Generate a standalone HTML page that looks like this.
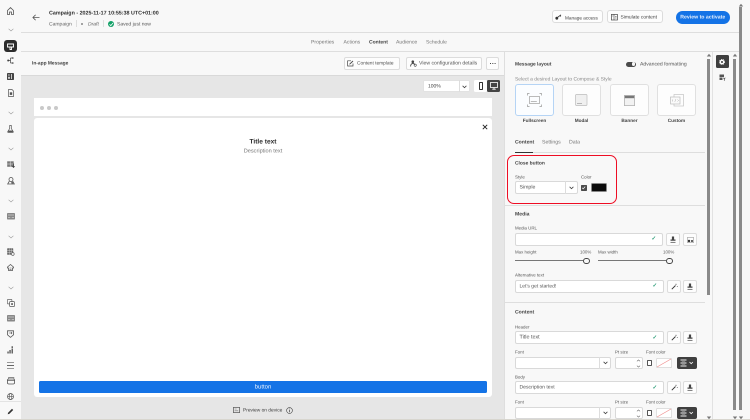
<!DOCTYPE html>
<html lang="en"><head><meta charset="utf-8"><title>Campaign</title>
<style>
*{box-sizing:border-box}
html,body{margin:0;padding:0}
body{width:750px;height:420px;overflow:hidden;background:#f8f8f8;position:relative;font-family:"Liberation Sans",sans-serif;color:#444;font-size:5.1px}
#w{position:absolute;left:0;top:0;width:750px;height:420px;overflow:hidden;background:#f8f8f8;filter:blur(.3px);text-rendering:geometricPrecision}
.a{position:absolute}
.t{position:absolute;white-space:nowrap;line-height:9px;transform:translateY(.6px)}
.b{font-weight:bold}
.btn{position:absolute;background:#fdfdfd;border:.7px solid #dcdcdc;border-radius:2px}
.f{position:absolute;background:#fff;border:.7px solid #d9d9d9;border-radius:2px}
.l{color:#5a5a5a;font-size:4.4px}
.h{position:absolute;background:#dedede;height:1px}
.sb{position:absolute;background:#8a8a8a;width:2.7px}
svg{position:absolute;overflow:visible}
.ck{position:absolute;color:#2d9d78;font-size:5.5px;font-weight:bold;line-height:8px}
.card{position:absolute;top:84px;width:39px;height:32px;background:#fdfdfd;border:.7px solid #e0e0e0;border-radius:3px}
.cap{position:absolute;top:116px;width:39px;text-align:center;font-weight:bold;font-size:4.7px;line-height:9px;color:#444}
</style></head><body><div id="w">

<!-- canvas -->
<div class="a" style="left:21px;top:75px;width:484px;height:344px;background:#e6e6e6"></div>
<div class="a" style="left:34px;top:98px;width:458px;height:18px;background:#fff"></div>
<div class="a" style="left:34px;top:118px;width:458px;height:279px;background:#fff;border-radius:3px"></div>
<div class="a" style="left:40px;top:105.5px;width:4px;height:4px;border-radius:50%;background:#c9c9c9"></div>
<div class="a" style="left:47px;top:105.5px;width:4px;height:4px;border-radius:50%;background:#c9c9c9"></div>
<div class="a" style="left:54px;top:105.5px;width:4px;height:4px;border-radius:50%;background:#c9c9c9"></div>
<div class="t b" style="left:213px;width:100px;text-align:center;top:137px;font-size:6.6px;color:#2c2c2c">Title text</div>
<div class="t" style="left:213px;width:100px;text-align:center;top:147px;font-size:5.6px;color:#777">Description text</div>
<svg style="left:482px;top:124px" width="6" height="6" viewBox="0 0 6 6"><path d="M.8.8l4.4 4.4M5.2.8L.8 5.2" stroke="#222" stroke-width=".9" fill="none"/></svg>
<div class="a" style="left:39px;top:381px;width:448px;height:12px;background:#1473e6;border-radius:1.5px"></div>
<div class="t" style="left:39px;width:448px;top:383px;text-align:center;color:#e8f1fd;font-size:6px">button</div>
<svg style="left:233px;top:407px" width="7" height="6" viewBox="0 0 7 6"><rect x=".4" y=".4" width="6.2" height="5.2" fill="none" stroke="#555" stroke-width=".7"/><path d="M1.600 2h2M1.600 3.800h3.600" stroke="#777" stroke-width=".6"/></svg>
<div class="t" style="left:243px;top:406px;font-size:4.85px;color:#444">Preview on device</div>
<svg style="left:286px;top:407px" width="7" height="7" viewBox="0 0 7 7"><circle cx="3.500" cy="3.500" r="2.900" fill="none" stroke="#444" stroke-width=".6"/><path d="M3.500 3v2.200M3.500 1.600v.8" stroke="#444" stroke-width=".7"/></svg>
<div class="a" style="left:0;top:419px;width:750px;height:1px;background:#d8d6cf"></div>

<!-- zoom toolbar -->
<div class="f" style="left:423px;top:80px;width:47px;height:12px;border-radius:1.500px;border-color:#e2e2e2"></div>
<div class="a" style="left:458.500px;top:80px;width:.7px;height:12px;background:#ddd"></div>
<div class="t" style="left:428px;top:81.500px;font-size:5px">100%</div>
<svg style="left:462px;top:84.500px" width="5" height="4" viewBox="0 0 5 4"><path d="M.6.800l1.900 1.900L4.400.800" fill="none" stroke="#444" stroke-width=".8"/></svg>
<div class="a" style="left:474px;top:80px;width:13px;height:12px;background:#fff;border-radius:1.500px"></div>
<div class="a" style="left:478.500px;top:82px;width:4px;height:8px;border:.8px solid #333;border-radius:.7px"></div>
<div class="a" style="left:487px;top:80px;width:13px;height:12px;background:#444;border-radius:1.500px"></div>
<svg style="left:489.500px;top:82px" width="8" height="8" viewBox="0 0 8 8"><rect x=".5" y=".5" width="7" height="5" fill="none" stroke="#fff" stroke-width=".8"/><path d="M4 5.500v1.500M2.300 7.200h3.400" stroke="#fff" stroke-width=".8"/></svg>

<!-- header -->
<svg style="left:32px;top:14px" width="8" height="7" viewBox="0 0 8 7"><path d="M7.500 3.500H1M3.600.8L.9 3.500l2.700 2.700" fill="none" stroke="#555" stroke-width=".8"/></svg>
<div class="t b" style="left:49px;top:8.500px;font-size:5.350px;color:#2c2c2c">Campaign - 2025-11-17 10:55:38 UTC+01:00</div>
<div class="t" style="left:49px;top:19.500px;color:#666;font-size:5px">Campaign</div>
<div class="a" style="left:75.500px;top:20px;width:.6px;height:7px;background:#ddd"></div>
<div class="a" style="left:81px;top:23px;width:2.400px;height:2.400px;border-radius:50%;background:#888"></div>
<div class="t" style="left:88px;top:19.500px;color:#666;font-style:italic;font-size:5px">Draft</div>
<div class="a" style="left:103px;top:20px;width:.6px;height:7px;background:#ddd"></div>
<div class="a" style="left:107.500px;top:20.500px;width:6.500px;height:6.500px;border-radius:50%;background:#12a067"></div>
<svg style="left:107.500px;top:20.500px" width="6.500" height="6.500" viewBox="0 0 6.500 6.500"><path d="M1.600 3.300l1.200 1.300 2.200-2.600" fill="none" stroke="#fff" stroke-width=".8"/></svg>
<div class="t" style="left:117px;top:19.500px;color:#555;font-size:5px">Saved just now</div>

<div class="btn" style="left:552px;top:10px;width:51px;height:13px;border-radius:3px"></div>
<svg style="left:555px;top:13.500px" width="7" height="6" viewBox="0 0 7 6"><circle cx="1.800" cy="4.200" r="1.400" fill="#333"/><path d="M2.800 3.200L6 .8M5 1.500l.8.9" stroke="#333" stroke-width=".9"/></svg>
<div class="t" style="left:565px;top:12.500px;color:#444;font-size:4.700px">Manage access</div>
<div class="btn" style="left:607px;top:10px;width:56px;height:13px;border-radius:3px"></div>
<svg style="left:611px;top:13.500px" width="7" height="6.500" viewBox="0 0 7 6.500"><rect x=".4" y=".4" width="6" height="5.600" fill="none" stroke="#444" stroke-width=".7"/><path d="M3 .4v5.600M1.200 2h1M4 2.500h1.600M4 4h1.600" stroke="#444" stroke-width=".6"/></svg>
<div class="t" style="left:620.500px;top:12.500px;color:#444;font-size:4.900px">Simulate content</div>
<div class="a" style="left:675.500px;top:10.500px;width:54.500px;height:13px;border-radius:6.500px;background:#1473e6"></div>
<div class="t b" style="left:675.500px;width:54.500px;text-align:center;top:12.500px;color:#e8f1fd;font-size:5.200px">Review to activate</div>
<div class="h" style="left:21px;top:32px;width:718px"></div>

<!-- tabs -->
<div class="t" style="left:311px;top:37.500px;color:#777">Properties</div>
<div class="t" style="left:343.500px;top:37.500px;color:#777">Actions</div>
<div class="t b" style="left:369px;top:37.500px;color:#444;font-size:5px">Content</div>
<div class="t" style="left:396px;top:37.500px;color:#777">Audience</div>
<div class="t" style="left:426px;top:37.500px;color:#777;font-size:5px">Schedule</div>
<div class="a" style="left:369px;top:50.500px;width:18px;height:1.200px;background:#333"></div>
<div class="h" style="left:21px;top:51px;width:718px"></div>

<!-- toolbar -->
<div class="t b" style="left:32px;top:59px;color:#444;font-size:4.850px">In-app Message</div>
<div class="btn" style="left:344px;top:57px;width:56px;height:13px"></div>
<svg style="left:347px;top:60px" width="7" height="7" viewBox="0 0 7 7"><path d="M6 3.500V6H.6V.8h3.400" fill="none" stroke="#444" stroke-width=".7"/><path d="M2.500 4.300L6 1" stroke="#444" stroke-width=".9"/></svg>
<div class="t" style="left:357px;top:59px;color:#555;font-size:4.800px">Content template</div>
<div class="btn" style="left:406px;top:57px;width:76px;height:13px"></div>
<svg style="left:410px;top:60px" width="7" height="7" viewBox="0 0 7 7"><circle cx="2.800" cy="1.700" r="1.300" fill="#444"/><path d="M.6 6.500c0-2 1-3 2.200-3s1.800.6 2 1.200" fill="none" stroke="#444" stroke-width=".9"/><circle cx="5.200" cy="5.200" r="1.100" fill="none" stroke="#444" stroke-width=".6"/></svg>
<div class="t" style="left:419px;top:59px;color:#555;font-size:5.150px">View configuration details</div>
<div class="btn" style="left:486px;top:57px;width:13px;height:13px"></div>
<div class="a" style="left:489.500px;top:63px;width:1.200px;height:1.200px;background:#444;box-shadow:2.300px 0 #444,4.600px 0 #444"></div>
<div class="h" style="left:21px;top:75px;width:484px;background:#d9d9d9"></div>

<!-- right panel -->
<div class="a" style="left:504px;top:52px;width:1px;height:367px;background:#dedede"></div>
<div class="t b" style="left:515px;top:59.500px;color:#444;font-size:4.900px">Message layout</div>
<div class="a" style="left:626px;top:61.500px;width:10px;height:5.500px;border-radius:3px;background:#4b4b4b"></div>
<div class="a" style="left:631.500px;top:62.300px;width:3.800px;height:3.800px;border-radius:50%;background:#f8f8f8"></div>
<div class="t" style="left:640px;top:59.500px;color:#555;font-size:5.100px">Advanced formatting</div>
<div class="t" style="left:515px;top:74.500px;color:#8a8a8a;font-size:4.950px">Select a desired Layout to Compose &amp; Style</div>

<div class="card" style="left:515px;border-color:#b5d4f5;background:#fbfdff"></div>
<svg style="left:527px;top:93px" width="15" height="14" viewBox="0 0 15 14"><rect x="2.500" y="3.500" width="10" height="7" fill="none" stroke="#aaa" stroke-width=".8"/><path d="M3.800 8.500h6" stroke="#aaa" stroke-width=".8"/><path d="M.5 2.500V.5h2M12.500.5h2v2M14.500 11.500v2h-2M2.500 13.500h-2v-2" fill="none" stroke="#999" stroke-width=".7"/></svg>
<div class="cap" style="left:515px">Fullscreen</div>
<div class="card" style="left:562px"></div>
<svg style="left:575px;top:94px" width="13" height="12" viewBox="0 0 13 12"><rect x=".5" y=".5" width="11.500" height="11" rx="1" fill="#f0f0f0" stroke="#bbb" stroke-width=".7"/><path d="M2 9.500h5" stroke="#aaa" stroke-width=".8"/></svg>
<div class="cap" style="left:562px">Modal</div>
<div class="card" style="left:610px"></div>
<svg style="left:624px;top:94.500px" width="11" height="11" viewBox="0 0 11 11"><rect x=".4" y=".4" width="10.200" height="10.200" fill="#f2f2f2" stroke="#aaa" stroke-width=".7"/><rect x=".8" y=".8" width="9.400" height="2.400" fill="#777"/></svg>
<div class="cap" style="left:610px">Banner</div>
<div class="card" style="left:657px"></div>
<svg style="left:670px;top:93.500px" width="14" height="13" viewBox="0 0 14 13"><rect x="4" y=".5" width="9.500" height="11.500" fill="none" stroke="#c4c4c4" stroke-width=".7"/><rect x=".5" y="3" width="9.500" height="7" fill="#fafafa" stroke="#bbb" stroke-width=".7"/><path d="M3 5.500L2 6.500l1 1M7.500 5.500l1 1-1 1M5.800 5.200L4.800 7.800" fill="none" stroke="#aaa" stroke-width=".5"/></svg>
<div class="cap" style="left:657px">Custom</div>

<div class="t b" style="left:515px;top:138px;color:#444;font-size:5.100px">Content</div>
<div class="t" style="left:542px;top:138px;color:#777;font-size:5.200px">Settings</div>
<div class="t" style="left:569px;top:138px;color:#777;font-size:5.200px">Data</div>
<div class="h" style="left:515px;top:152px;width:190px"></div>
<div class="a" style="left:515px;top:151.500px;width:18px;height:1.200px;background:#333"></div>

<!-- close button -->
<div class="t b" style="left:515px;top:158.500px;color:#444;font-size:4.900px">Close button</div>
<div class="t l" style="left:515px;top:172px">Style</div>
<div class="t l" style="left:581px;top:172px">Color</div>
<div class="f" style="left:515px;top:181px;width:63px;height:13px"></div>
<div class="a" style="left:564.500px;top:181px;width:.7px;height:13px;background:#ddd"></div>
<div class="t" style="left:519.500px;top:183px;font-size:5.200px;color:#555">Simple</div>
<svg style="left:569px;top:186px" width="5" height="4" viewBox="0 0 5 4"><path d="M.6.800l1.900 1.900L4.400.800" fill="none" stroke="#444" stroke-width=".8"/></svg>
<div class="a" style="left:581px;top:185px;width:5.500px;height:5.500px;background:#4b4b4b;border-radius:.7px"></div>
<svg style="left:581px;top:185px" width="5.500" height="5.500" viewBox="0 0 5.500 5.500"><path d="M1.200 2.800l1 1.100 2-2.300" fill="none" stroke="#fff" stroke-width=".7"/></svg>
<div class="a" style="left:591px;top:183px;width:15.500px;height:9px;background:#0b0b0b;border-radius:1.500px;border:.5px solid #888"></div>
<div class="a" style="left:507px;top:155px;width:110px;height:49px;border:1px solid #ee0d24;border-radius:7px"></div>
<div class="h" style="left:505px;top:204.500px;width:200px"></div>

<!-- media -->
<div class="t b" style="left:515px;top:209.500px;color:#444;font-size:5.100px">Media</div>
<div class="t l" style="left:515px;top:223px">Media URL</div>
<div class="f" style="left:515px;top:233px;width:148px;height:13px"></div>
<div class="ck" style="left:651.500px;top:235px">✓</div>
<div class="btn" style="left:666px;top:233px;width:14px;height:13px"></div>
<svg style="left:670px;top:236px" width="6" height="7" viewBox="0 0 6 7"><path d="M1.900.5h2.200v3H5.500v1.200H.5V3.500h1.400z" fill="#444"/><path d="M.5 6.300h5" stroke="#444" stroke-width=".7"/></svg>
<div class="btn" style="left:683px;top:233px;width:14px;height:13px"></div>
<svg style="left:686.500px;top:236.500px" width="7" height="6" viewBox="0 0 7 6"><rect x=".4" y=".4" width="6.200" height="5.200" fill="none" stroke="#888" stroke-width=".5"/><circle cx="2" cy="4" r="1.200" fill="#333"/><circle cx="5" cy="4" r="1" fill="#333"/></svg>
<div class="t l" style="left:515px;top:247px">Max height</div>
<div class="t l" style="left:580px;top:247px">100%</div>
<div class="t l" style="left:598px;top:247px">Max width</div>
<div class="t l" style="left:663px;top:247px">100%</div>
<div class="a" style="left:515px;top:260px;width:68px;height:1.100px;background:#777"></div>
<div class="a" style="left:583px;top:257.500px;width:6.500px;height:6.500px;border:.9px solid #444;border-radius:50%;background:#f8f8f8"></div>
<div class="a" style="left:598px;top:260px;width:68px;height:1.100px;background:#777"></div>
<div class="a" style="left:666px;top:257.500px;width:6.500px;height:6.500px;border:.9px solid #444;border-radius:50%;background:#f8f8f8"></div>
<div class="t l" style="left:515px;top:270px">Alternative text</div>
<div class="f" style="left:515px;top:279.500px;width:149px;height:13px"></div>
<div class="t" style="left:519.500px;top:281.500px;color:#555;font-size:5px">Let's get started!</div>
<div class="ck" style="left:652.500px;top:282px">✓</div>
<div class="btn" style="left:667px;top:279.500px;width:13.500px;height:13px"></div>
<svg style="left:670.500px;top:282.500px" width="7" height="7" viewBox="0 0 7 7"><path d="M.8 6.200L4.500 2.500" stroke="#333" stroke-width=".9"/><path d="M5 .6v1.400M4.300 1.300h1.400M6.300 3v1M5.800 3.500h1" stroke="#555" stroke-width=".4"/></svg>
<div class="btn" style="left:683px;top:279.500px;width:14px;height:13px"></div>
<svg style="left:687px;top:282.500px" width="6" height="7" viewBox="0 0 6 7"><path d="M1.900.5h2.200v3H5.500v1.200H.5V3.500h1.400z" fill="#444"/><path d="M.5 6.300h5" stroke="#444" stroke-width=".7"/></svg>
<div class="h" style="left:505px;top:302px;width:200px"></div>

<!-- content -->
<div class="t b" style="left:515px;top:308px;color:#444;font-size:5.100px">Content</div>
<div class="t l" style="left:515px;top:321.500px">Header</div>
<div class="f" style="left:515px;top:331px;width:149px;height:13px"></div>
<div class="t" style="left:519.500px;top:332.500px;color:#555;font-size:5.400px">Title text</div>
<div class="ck" style="left:652.500px;top:333.500px">✓</div>
<div class="btn" style="left:667px;top:331px;width:13.500px;height:13px"></div>
<svg style="left:670.500px;top:334px" width="7" height="7" viewBox="0 0 7 7"><path d="M.8 6.200L4.500 2.500" stroke="#333" stroke-width=".9"/><path d="M5 .6v1.400M4.300 1.300h1.400M6.300 3v1M5.800 3.500h1" stroke="#555" stroke-width=".4"/></svg>
<div class="btn" style="left:683px;top:331px;width:14px;height:13px"></div>
<svg style="left:687px;top:334px" width="6" height="7" viewBox="0 0 6 7"><path d="M1.900.5h2.200v3H5.500v1.200H.5V3.500h1.400z" fill="#444"/><path d="M.5 6.300h5" stroke="#444" stroke-width=".7"/></svg>
<div class="t l" style="left:515px;top:346.500px">Font</div>
<div class="t l" style="left:615px;top:346.500px">Pt size</div>
<div class="t l" style="left:646px;top:346.500px">Font color</div>
<div class="f" style="left:515px;top:356.500px;width:96px;height:12.500px"></div>
<div class="a" style="left:598.500px;top:356.500px;width:.7px;height:12.500px;background:#ddd"></div>
<svg style="left:602.500px;top:361px" width="5" height="4" viewBox="0 0 5 4"><path d="M.6.800l1.900 1.900L4.400.800" fill="none" stroke="#444" stroke-width=".8"/></svg>
<div class="f" style="left:615px;top:356.500px;width:28px;height:12.500px"></div>
<svg style="left:635.500px;top:358.500px" width="5" height="9" viewBox="0 0 5 9"><path d="M.9 2.300L2.500.9l1.600 1.400M.9 6.700l1.600 1.400 1.600-1.400" fill="none" stroke="#666" stroke-width=".6"/></svg>
<div class="a" style="left:646.500px;top:360px;width:5.500px;height:5.500px;border:.7px solid #555;border-radius:.7px;background:#fff"></div>
<svg style="left:656px;top:357.500px" width="16" height="10" viewBox="0 0 16 10"><rect x=".3" y=".3" width="15.400" height="9.400" rx="1.500" fill="#fff" stroke="#ccc" stroke-width=".6"/><path d="M1 9L15 1" stroke="#f08a8a" stroke-width=".6"/></svg>
<div class="a" style="left:677px;top:356.500px;width:19.500px;height:12.500px;background:#3f3f3f;border-radius:2px"></div>
<svg style="left:680px;top:359px" width="14" height="8" viewBox="0 0 14 8"><path d="M.5 1h6M.5 4h6M.5 7h6" stroke="#eee" stroke-width=".9"/><path d="M1.800 2.500h3.400M1.800 5.500h3.400" stroke="#bbb" stroke-width=".6"/><path d="M9.500 3l1.700 1.700L12.900 3" fill="none" stroke="#fff" stroke-width=".8"/></svg>

<div class="t l" style="left:515px;top:371.500px">Body</div>
<div class="f" style="left:515px;top:381px;width:149px;height:13px"></div>
<div class="t" style="left:519.500px;top:383px;color:#555;font-size:5.100px">Description text</div>
<div class="ck" style="left:652.500px;top:384px">✓</div>
<div class="btn" style="left:667px;top:381px;width:13.500px;height:13px"></div>
<svg style="left:670.500px;top:384px" width="7" height="7" viewBox="0 0 7 7"><path d="M.8 6.200L4.500 2.500" stroke="#333" stroke-width=".9"/><path d="M5 .6v1.400M4.300 1.300h1.400M6.300 3v1M5.800 3.500h1" stroke="#555" stroke-width=".4"/></svg>
<div class="btn" style="left:683px;top:381px;width:14px;height:13px"></div>
<svg style="left:687px;top:384px" width="6" height="7" viewBox="0 0 6 7"><path d="M1.900.5h2.200v3H5.500v1.200H.5V3.500h1.400z" fill="#444"/><path d="M.5 6.300h5" stroke="#444" stroke-width=".7"/></svg>
<div class="t l" style="left:515px;top:396.500px">Font</div>
<div class="t l" style="left:615px;top:396.500px">Pt size</div>
<div class="t l" style="left:646px;top:396.500px">Font color</div>
<div class="f" style="left:515px;top:406.500px;width:96px;height:12.500px"></div>
<div class="a" style="left:598.500px;top:406.500px;width:.7px;height:12.500px;background:#ddd"></div>
<svg style="left:602.500px;top:411px" width="5" height="4" viewBox="0 0 5 4"><path d="M.6.800l1.900 1.900L4.400.800" fill="none" stroke="#444" stroke-width=".8"/></svg>
<div class="f" style="left:615px;top:406.500px;width:28px;height:12.500px"></div>
<svg style="left:635.500px;top:408.500px" width="5" height="9" viewBox="0 0 5 9"><path d="M.9 2.300L2.500.9l1.600 1.400M.9 6.700l1.600 1.400 1.600-1.400" fill="none" stroke="#666" stroke-width=".6"/></svg>
<div class="a" style="left:646.500px;top:410px;width:5.500px;height:5.500px;border:.7px solid #555;border-radius:.7px;background:#fff"></div>
<svg style="left:656px;top:407.500px" width="16" height="10" viewBox="0 0 16 10"><rect x=".3" y=".3" width="15.400" height="9.400" rx="1.500" fill="#fff" stroke="#ccc" stroke-width=".6"/><path d="M1 9L15 1" stroke="#f08a8a" stroke-width=".6"/></svg>
<div class="a" style="left:677px;top:406.500px;width:19.500px;height:12.500px;background:#3f3f3f;border-radius:2px"></div>
<svg style="left:680px;top:409px" width="14" height="8" viewBox="0 0 14 8"><path d="M.5 1h6M.5 4h6M.5 7h6" stroke="#eee" stroke-width=".9"/><path d="M1.800 2.500h3.400M1.800 5.500h3.400" stroke="#bbb" stroke-width=".6"/><path d="M9.500 3l1.700 1.700L12.900 3" fill="none" stroke="#fff" stroke-width=".8"/></svg>

<div class="a" style="left:712px;top:52px;width:1px;height:367px;background:#e2e2e2"></div>
<!-- scrollbars -->
<div class="sb" style="left:707.300px;top:59px;height:236px"></div>
<div class="sb" style="left:733.300px;top:59px;height:351px"></div>
<div class="sb" style="left:739px;top:7px;height:403px"></div>
<svg style="left:706px;top:53px" width="6" height="4"><path d="M.8 3.500L3 .8l2.200 2.700z" fill="#777"/></svg>
<svg style="left:732px;top:53px" width="6" height="4"><path d="M.8 3.500L3 .8l2.200 2.700z" fill="#777"/></svg>
<svg style="left:738px;top:3px" width="6" height="4"><path d="M.8 3.500L3 .8l2.200 2.700z" fill="#777"/></svg>
<svg style="left:706px;top:415.500px" width="6" height="4"><path d="M.8.500L3 3.200 5.200.500z" fill="#777"/></svg>
<svg style="left:731.500px;top:415.500px" width="6" height="4"><path d="M.8.500L3 3.200 5.200.500z" fill="#777"/></svg>
<svg style="left:737.500px;top:415.500px" width="6" height="4"><path d="M.8.500L3 3.200 5.200.500z" fill="#777"/></svg>

<!-- right rail -->
<div class="a" style="left:715.500px;top:55px;width:13px;height:12.500px;background:#3f3f3f;border-radius:1.500px"></div>
<svg style="left:719px;top:58.500px" width="6" height="6" viewBox="0 0 6 6"><circle cx="3" cy="3" r="1.700" fill="none" stroke="#fff" stroke-width="1.300"/><circle cx="3" cy="3" r="2.700" fill="none" stroke="#fff" stroke-width=".7" stroke-dasharray="1 .9"/></svg>
<svg style="left:719px;top:74px" width="7" height="7" viewBox="0 0 7 7"><path d="M.5.500h4.500v2.500H.5zM.5 3.500h3v2.500h-3z" fill="#555"/><path d="M4.300 3.800l1 1 1-1M5.300 4.800V6.800" stroke="#444" stroke-width=".7" fill="none"/></svg>

<!-- sidebar -->
<svg style="left:7px;top:7px" width="7" height="8" viewBox="0 0 7 8"><path d="M.5 3.500L3.500.6l3 2.900v4H4.500V5H2.500v2.500H.5z" fill="none" stroke="#555" stroke-width=".8"/></svg>
<svg style="left:8px;top:28px" width="6" height="4"><path d="M.6.800L3 3l2.400-2.200" fill="none" stroke="#999" stroke-width=".6"/></svg>
<div class="a" style="left:4px;top:39.500px;width:12.500px;height:12.500px;background:#2c2c2c;border-radius:3px"></div>
<svg style="left:7px;top:42.500px" width="7" height="7" viewBox="0 0 7 7"><path d="M.5 1h6v3h-6zM3 4v2.500h1.500V4" fill="none" stroke="#fff" stroke-width=".9"/></svg>
<svg style="left:7px;top:57px" width="7" height="7" viewBox="0 0 7 7"><path d="M1.500 3.500h2M3.500 1h2M3.500 6h2M3.500 1v5" fill="none" stroke="#444" stroke-width=".7"/><circle cx="1.200" cy="3.500" r="1" fill="#444"/><circle cx="5.800" cy="1" r=".8" fill="#444"/><circle cx="5.800" cy="6" r=".8" fill="#444"/></svg>
<svg style="left:7px;top:73px" width="7" height="7" viewBox="0 0 7 7"><rect width="7" height="7" rx=".8" fill="#444"/><path d="M1 2h1.800M4.500 1v5" stroke="#fff" stroke-width=".7"/><rect x="1" y="3.800" width="2" height="2" fill="#ccc"/></svg>
<svg style="left:7.500px;top:88.500px" width="6" height="8" viewBox="0 0 6 8"><path d="M.5.500h3.500L5.500 2v5.500h-5z" fill="none" stroke="#555" stroke-width=".7"/><rect x="1.800" y="3.300" width="2.400" height="2.600" fill="#555"/></svg>
<svg style="left:8px;top:111px" width="6" height="4"><path d="M.6.800L3 3l2.400-2.200" fill="none" stroke="#999" stroke-width=".6"/></svg>
<svg style="left:7px;top:124.500px" width="7" height="8" viewBox="0 0 7 8"><path d="M2.300.5h2.400M2.700.5v3L.8 6.500c-.3.600 0 1 .6 1h4.200c.6 0 .9-.4.600-1L4.300 3.500v-3" fill="none" stroke="#555" stroke-width=".7"/><path d="M1.500 5.500h4l.5 1.500H1z" fill="#555"/></svg>
<svg style="left:8px;top:147px" width="6" height="4"><path d="M.6.800L3 3l2.400-2.200" fill="none" stroke="#999" stroke-width=".6"/></svg>
<svg style="left:6.500px;top:161px" width="8" height="7" viewBox="0 0 8 7"><rect x=".2" y=".3" width="6.500" height="5.500" fill="#777"/><path d="M3.200.3v5.500M.2 3h6.500" stroke="#eee" stroke-width=".5"/><path d="M6.500 2.500v4M5.300 5.200l1.200 1.300 1.200-1.300" fill="none" stroke="#333" stroke-width=".7"/></svg>
<svg style="left:6.500px;top:176.500px" width="8" height="8" viewBox="0 0 8 8"><circle cx="4" cy="2.500" r="2" fill="none" stroke="#555" stroke-width=".8"/><path d="M2.300 4.200L.7 7h6.600L5.700 4.200" fill="none" stroke="#555" stroke-width=".8"/><circle cx="5.300" cy="5.800" r="1.100" fill="#666"/></svg>
<svg style="left:8px;top:199px" width="6" height="4"><path d="M.6.800L3 3l2.400-2.200" fill="none" stroke="#999" stroke-width=".6"/></svg>
<svg style="left:6.500px;top:212.500px" width="8" height="6.500" viewBox="0 0 8 6.500"><rect width="8" height="6.500" rx=".8" fill="#888"/><path d="M1 2h6M1 4.500h2.300M4.700 4.500H7" stroke="#eee" stroke-width=".6"/></svg>
<svg style="left:8px;top:235px" width="6" height="4"><path d="M.6.800L3 3l2.400-2.200" fill="none" stroke="#999" stroke-width=".6"/></svg>
<svg style="left:7px;top:248px" width="7.500" height="8" viewBox="0 0 7.500 8"><rect x=".2" y=".3" width="6" height="6.500" rx=".6" fill="#666"/><path d="M2.200.3v6.500M4.200.3v6.500M.2 2.500h6M.2 4.600h6" stroke="#eee" stroke-width=".4"/><circle cx="5.800" cy="6" r="1.400" fill="#eee" stroke="#555" stroke-width=".6"/></svg>
<svg style="left:7px;top:263.500px" width="7" height="8" viewBox="0 0 7 8"><path d="M3.500.5L6.500 3v1H5.500v2.500h-4V4H.5V3z" fill="none" stroke="#555" stroke-width=".8"/><path d="M2.500 4h2M2.500 5.300h2" stroke="#555" stroke-width=".6"/></svg>
<svg style="left:8px;top:286px" width="6" height="4"><path d="M.6.800L3 3l2.400-2.200" fill="none" stroke="#999" stroke-width=".6"/></svg>
<svg style="left:6.500px;top:299px" width="8" height="8" viewBox="0 0 8 8"><rect x=".4" y=".4" width="4.500" height="4.500" rx=".6" fill="none" stroke="#666" stroke-width=".7"/><rect x="2.600" y="2.600" width="4.900" height="4.900" rx=".6" fill="#f8f8f8" stroke="#555" stroke-width=".7"/><rect x="4.200" y="4.200" width="1.700" height="1.700" fill="#555"/></svg>
<svg style="left:6.500px;top:315px" width="8" height="6.500" viewBox="0 0 8 6.500"><rect width="8" height="6.500" rx=".8" fill="#888"/><path d="M1 2h6M1 4.500h2.300M4.700 4.500H7" stroke="#eee" stroke-width=".6"/></svg>
<svg style="left:7px;top:330px" width="7" height="8" viewBox="0 0 7 8"><path d="M.5.800h6v4L3.500 7.400.5 4.800z" fill="none" stroke="#555" stroke-width=".8"/><path d="M1.800 3h3M4 2l1 1-1 1" fill="none" stroke="#555" stroke-width=".6"/></svg>
<svg style="left:7px;top:346px" width="7" height="7.500" viewBox="0 0 7 7.500"><path d="M.3 5.500h1.500v2H.3zM2.300 4h1.500v3.500H2.300zM4.500 2.500H6v5H4.500zM4.500.2H6V2H4.500z" fill="#666"/></svg>
<div class="a" style="left:6.800px;top:362px;width:7.500px;height:7px;border-top:1.800px solid #999;border-bottom:1.800px solid #999"></div>
<div class="a" style="left:6.800px;top:365px;width:7.500px;height:.7px;background:#666"></div>
<svg style="left:6.500px;top:377px" width="8" height="7.500" viewBox="0 0 8 7.500"><path d="M1.500 1.800V.6h5.400v1.200" fill="none" stroke="#666" stroke-width=".7"/><rect x=".4" y="2" width="7.200" height="5" rx="1.500" fill="none" stroke="#555" stroke-width=".8"/><path d="M.4 3.500h7.200" stroke="#555" stroke-width=".7"/></svg>
<svg style="left:7px;top:393px" width="7" height="7" viewBox="0 0 7 7"><circle cx="3.500" cy="3.500" r="3" fill="none" stroke="#555" stroke-width=".7"/><ellipse cx="3.500" cy="3.500" rx="1.300" ry="3" fill="none" stroke="#555" stroke-width=".6"/><path d="M.5 3.500h6" stroke="#555" stroke-width=".6"/></svg>
<div class="a" style="left:0;top:400.500px;width:21px;height:.7px;background:#e3e3e3"></div>
<svg style="left:7px;top:407.500px" width="7" height="7" viewBox="0 0 7 7"><path d="M.7 6.300l.4-1.600L5 .8l1.200 1.200-3.900 3.900z" fill="#333"/></svg>
</div></body></html>
